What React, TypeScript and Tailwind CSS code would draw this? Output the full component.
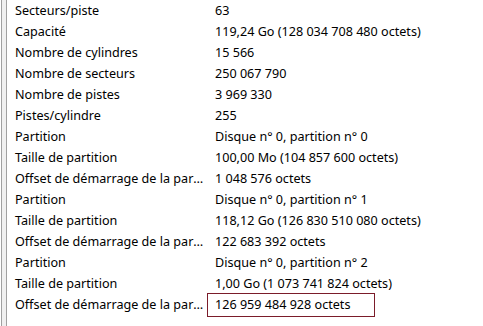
import React from "react";

const rows: [string, string][] = [
  ["Secteurs/piste", "63"],
  ["Capacité", "119,24 Go (128 034 708 480 octets)"],
  ["Nombre de cylindres", "15 566"],
  ["Nombre de secteurs", "250 067 790"],
  ["Nombre de pistes", "3 969 330"],
  ["Pistes/cylindre", "255"],
  ["Partition", "Disque n° 0, partition n° 0"],
  ["Taille de partition", "100,00 Mo (104 857 600 octets)"],
  ["Offset de démarrage de la partition", "1 048 576 octets"],
  ["Partition", "Disque n° 0, partition n° 1"],
  ["Taille de partition", "118,12 Go (126 830 510 080 octets)"],
  ["Offset de démarrage de la partition", "122 683 392 octets"],
  ["Partition", "Disque n° 0, partition n° 2"],
  ["Taille de partition", "1,00 Go (1 073 741 824 octets)"],
  ["Offset de démarrage de la partition", "126 959 484 928 octets"],
];

export default function App() {
  return (
    <div
      className="w-[483px] h-[326px] bg-white overflow-hidden flex text-[12.6px] text-black"
      style={{ fontFamily: '"Noto Sans", "Open Sans", sans-serif' }}
    >
      <div className="w-[6px] h-full ml-[1px] border-l border-r border-[#a0a0a0] bg-[#f0f0f0] shrink-0" />
      <div className="flex flex-col flex-1">
        {rows.map(([k, v], i) => (
          <div key={i} className="relative flex h-[21px] items-center leading-[21px]">
            <div className="w-[200px] shrink-0 pl-[8px] pr-0 whitespace-nowrap overflow-hidden text-ellipsis">
              {k}
            </div>
            <div className="pl-[8px] whitespace-nowrap">{v}</div>
            {i === rows.length - 1 && (
              <div className="absolute left-[200px] top-[-1px] h-[24px] w-[168px] border border-[#7b1c2a]" />
            )}
          </div>
        ))}
      </div>
    </div>
  );
}
